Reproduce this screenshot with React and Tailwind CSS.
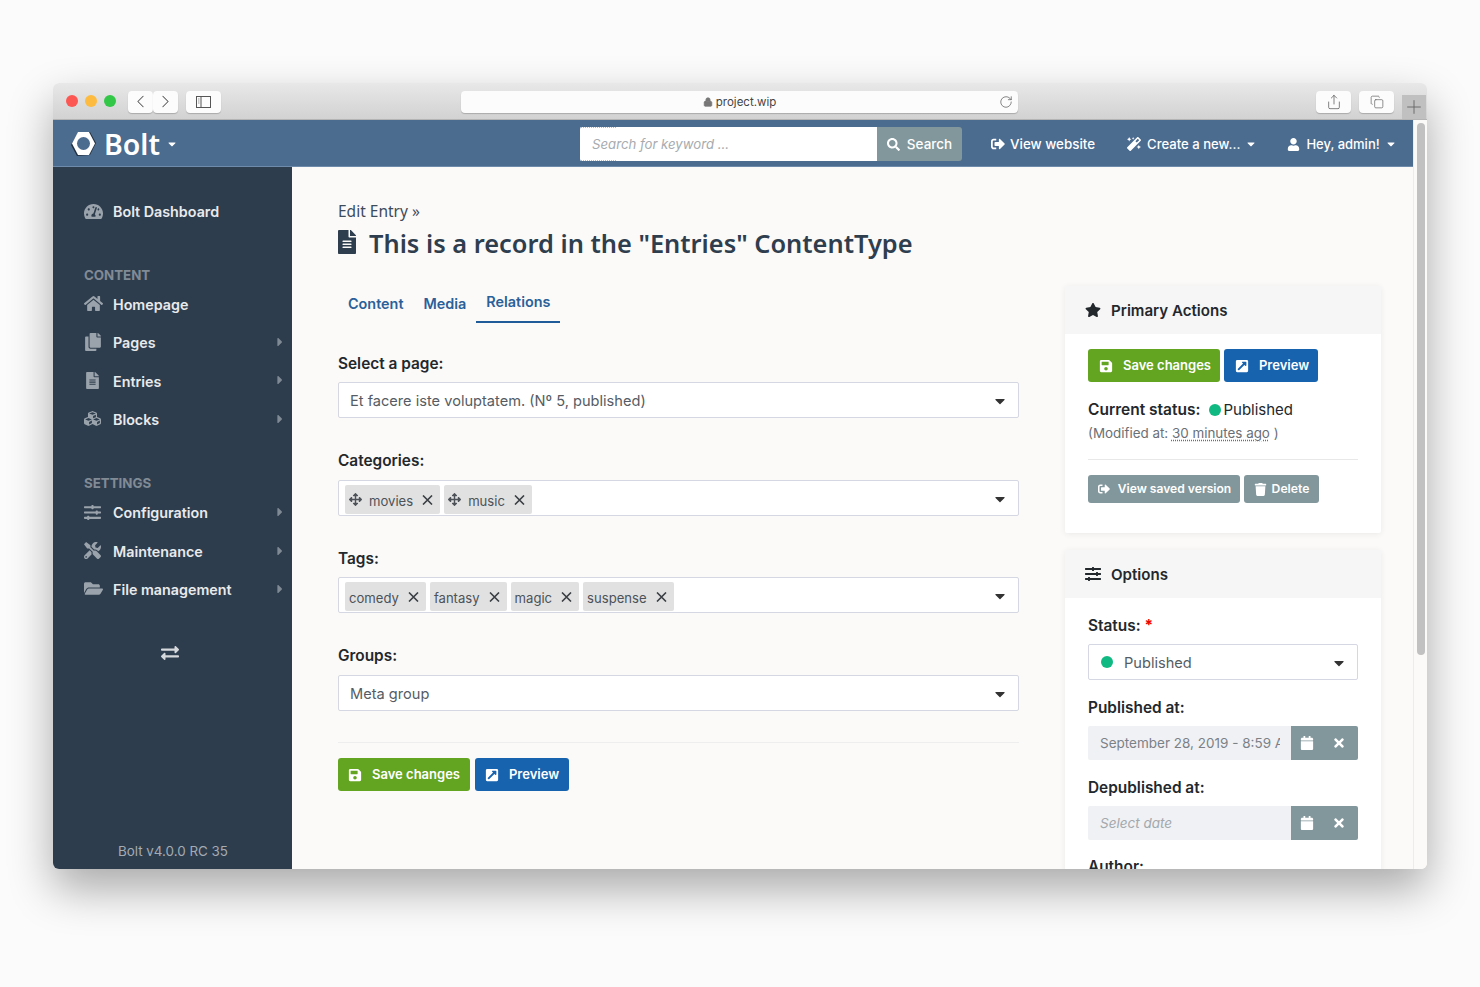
import React from "react";
import {
  FaTachometerAlt, FaHome, FaCopy, FaFileAlt, FaCubes, FaSlidersH, FaTools, FaFolderOpen,
  FaExchangeAlt, FaSignOutAlt, FaMagic, FaUser, FaSearch, FaStar, FaSave, FaExternalLinkSquareAlt,
  FaTrash, FaCalendar, FaTimes, FaArrowsAlt, FaCaretRight, FaCaretDown,
} from "react-icons/fa";
import { Lock, RotateCw, ChevronLeft, ChevronRight, Share, Copy, Plus } from "lucide-react";

const sans = "font-['Inter',sans-serif]";

const Chrome = ({ className, children }) => (
  <div className={`h-[22px] mt-[1px] rounded-[4px] bg-[#fcfcfc] shadow-[0_1px_1px_rgba(0,0,0,0.2)] flex items-center justify-center text-[#555] ${className}`}>
    {children}
  </div>
);

const TitleBar = () => (
  <div className="h-[37px] shrink-0 flex bg-gradient-to-b from-[#e8e8e8] to-[#d2d2d2] border-b border-[#b4b4b4]">
    <div className="flex items-center w-full pl-[13px]">
      <span className="w-[12px] h-[12px] rounded-full bg-[#fc5753]" />
      <span className="w-[12px] h-[12px] rounded-full bg-[#fdbc40] ml-[7px]" />
      <span className="w-[12px] h-[12px] rounded-full bg-[#33c748] ml-[7px]" />
      <Chrome className="w-[25px] ml-[12px]"><ChevronLeft size={21} strokeWidth={1.2} /></Chrome>
      <Chrome className="w-[25px]"><ChevronRight size={21} strokeWidth={1.2} /></Chrome>
      <Chrome className="w-[35px] ml-[8px]">
        <svg width="15" height="12" viewBox="0 0 15 12" fill="none" stroke="#555" strokeWidth="1">
          <rect x="0.5" y="0.5" width="14" height="11" />
          <path d="M5 0.5 V11.5" />
          <path d="M2 3 H3.5 M2 5 H3.5 M2 7 H3.5" stroke="#999" />
        </svg>
      </Chrome>
      <Chrome className="w-[557px] ml-[240px] relative text-[11.5px] font-['Inter',sans-serif]">
        <Lock size={10} className="mr-[3px] mt-[1px] fill-[#777] text-[#777]" />
        <span className="text-[#444] mt-[3px]">project.wip</span>
        <RotateCw size={14} strokeWidth={1.2} className="absolute right-[5px]" />
      </Chrome>
      <Chrome className="w-[35px] ml-[298px]"><Share size={16} strokeWidth={1.1} /></Chrome>
      <Chrome className="w-[35px] ml-[8px]"><Copy size={14} strokeWidth={1.1} /></Chrome>
      <div className="w-[24px] h-[24px] ml-[8px] mt-[12px] bg-[#c0c0c0] flex items-center justify-center text-[#666]">
        <Plus size={22} strokeWidth={1} />
      </div>
    </div>
  </div>
);

const Logo = () => (
  <svg width="27" height="27" viewBox="0 0 27 27" className="shrink-0">
    <polygon points="8,2 20,1 26,12 20,24 7,25 1,14" fill="#22303f" />
    <polygon points="8,1 19,1 25,12.5 19,24 8,24 2,12.5" fill="#fff" />
    <circle cx="13.5" cy="12.5" r="6.5" fill="#4b6b8f" />
  </svg>
);

const Header = () => (
  <div className={`h-[47px] shrink-0 pt-[2px] bg-[#4b6b8f] border-b border-[#6f8bab] flex items-center text-white ${sans}`}>
    <div className="ml-[17px]"><Logo /></div>
    <span className="ml-[7px] text-[28.5px] font-semibold font-['Noto_Sans',sans-serif] leading-none">Bolt</span>
    <FaCaretDown size={12} className="ml-[6px]" />
    <div className="ml-[402px] w-[297px] h-[34px] bg-white rounded-l-[2px] flex items-center pl-[12px] pt-[2px] text-[13.2px] italic text-[#a6abb0] relative">
      Search for keyword ...
      <span className="absolute top-0 left-0 w-[36px] border-t border-dotted border-[#a9bdd2]" />
      <span className="absolute bottom-0 left-0 w-[36px] border-t border-dotted border-[#a9bdd2]" />
    </div>
    <div className="w-[85px] h-[34px] bg-[#82979c] rounded-r-[3px] flex items-center justify-center gap-[7px] text-[13.5px] font-medium">
      <FaSearch size={13} /> Search
    </div>
    <FaSignOutAlt size={14} className="ml-[29px]" />
    <span className="ml-[5px] text-[13.4px] font-medium">View website</span>
    <FaMagic size={14} className="ml-[32px]" />
    <span className="ml-[6px] mt-[2px] text-[13.1px] font-medium">Create a new...</span>
    <FaCaretDown size={12} className="ml-[5px]" />
    <FaUser size={13} className="ml-[30px]" />
    <span className="ml-[6px] mt-[2px] text-[13px] font-medium">Hey, admin!</span>
    <FaCaretDown size={12} className="ml-[5px]" />
  </div>
);

const SideItem = ({ icon: Icon, label, arrow, size = 17 }) => (
  <div className="h-[38.4px] flex items-center pl-[31px] pr-[5px]">
    <div className="w-[29px] text-[#9aa3ac]"><Icon size={size} /></div>
    <span className="text-[14.3px] font-semibold text-[#e8eaec] flex-1 mt-[2px]">{label}</span>
    {arrow && <FaCaretRight size={14} className="text-[#7f8a95]" />}
  </div>
);

const Sidebar = () => (
  <div className={`w-[239px] shrink-0 bg-[#2e3d4d] flex flex-col ${sans}`}>
    <div className="mt-[25px]"><SideItem icon={FaTachometerAlt} label="Bolt Dashboard" size={19} /></div>
    <div className="mt-[37px] pl-[31px] text-[13.3px] font-bold text-[#818b96] leading-[16px] mb-[1px]">CONTENT</div>
    <SideItem icon={FaHome} label="Homepage" size={19} />
    <SideItem icon={FaCopy} label="Pages" arrow size={18} />
    <SideItem icon={FaFileAlt} label="Entries" arrow />
    <SideItem icon={FaCubes} label="Blocks" arrow />
    <div className="mt-[37px] pl-[31px] text-[13.3px] font-bold text-[#818b96] leading-[16px] mb-[2px]">SETTINGS</div>
    <SideItem icon={FaSlidersH} label="Configuration" arrow />
    <SideItem icon={FaTools} label="Maintenance" arrow />
    <SideItem icon={FaFolderOpen} label="File management" arrow size={19} />
    <div className="mt-[36px] flex justify-center pr-[5px] text-[#d6d9dc]"><FaExchangeAlt size={18} /></div>
    <div className="mt-auto mb-[8px] text-center text-[13.4px] text-[#a3abb3] pl-[1px]">Bolt v4.0.0 RC 35</div>
  </div>
);

const Btn = ({ icon: Icon, label, className, iconSize = 14, gap = "gap-[10px]" }) => (
  <div className={`inline-flex items-center justify-center font-semibold text-white rounded-[3px] ${gap} ${className}`}>
    <Icon size={iconSize} /> {label}
  </div>
);

const Save = ({ className = "" }) => <Btn icon={FaSave} label="Save changes" className={`w-[132px] h-[33px] text-[13px] bg-[#63a421] ${className}`} />;
const Preview = ({ className = "" }) => <Btn icon={FaExternalLinkSquareAlt} label="Preview" className={`w-[94px] h-[33px] text-[13px] bg-[#1763ae] ${className}`} />;

const Label = ({ children, className = "" }) => (
  <div className={`text-[15.4px] font-semibold text-[#23282d] leading-[20px] ${className}`}>{children}</div>
);

const Select = ({ children, className = "" }) => (
  <div className={`h-[36px] bg-white border border-[#d5d8e2] rounded-[2px] flex items-center text-[14.6px] text-[#555c63] ${className}`}>
    {children}
    <FaCaretDown size={16} className="ml-auto mr-[10px] mt-[2px] text-[#333]" />
  </div>
);

const XMark = () => (
  <svg width="11" height="10" viewBox="0 0 11 10" className="ml-[9px] mr-[7px] shrink-0">
    <path d="M1 0.5 L10 9.5 M10 0.5 L1 9.5" stroke="#3a3f44" strokeWidth="1.6" fill="none" />
  </svg>
);

const Chip = ({ label, drag }) => (
  <div className="h-[29px] mt-[3px] bg-[#e1e1e1] rounded-[2px] flex items-center pl-[4px] text-[13.1px] text-[#4c5258]">
    {drag && <FaArrowsAlt size={13} className="mr-[7px] text-[#4c5258]" />}
    <span className="mt-[5px]">{label}</span>
    <XMark />
  </div>
);

const Tab = ({ label, active }) => (
  <div className={`h-[40px] px-[10px] flex items-center text-[14.4px] font-semibold text-[#2a6099] ${active ? "border-b-2 border-[#1f5b99]" : "pt-[2px]"}`}>
    {label}
  </div>
);

const Form = () => (
  <div className="w-[681px] shrink-0">
    <div className="flex mt-[8px]">
      <Tab label="Content" />
      <Tab label="Media" />
      <Tab label="Relations" active />
    </div>
    <Label className="mt-[31px]">Select a page:</Label>
    <Select className="mt-[8px] pl-[11px]"><span className="mt-[3px]">Et facere iste voluptatem. (Nº 5, published)</span></Select>
    <Label className="mt-[33px]">Categories:</Label>
    <Select className="mt-[9px] pl-[6px] gap-[4px]">
      <Chip drag label="movies" />
      <Chip drag label="music" />
    </Select>
    <Label className="mt-[33px]">Tags:</Label>
    <Select className="mt-[8px] pl-[6px] gap-[4px]">
      <Chip label="comedy" />
      <Chip label="fantasy" />
      <Chip label="magic" />
      <Chip label="suspense" />
    </Select>
    <Label className="mt-[33px]">Groups:</Label>
    <Select className="mt-[9px] pl-[11px]"><span className="mt-[3px]">Meta group</span></Select>
    <div className="mt-[31px] border-t border-[#eeeeee]" />
    <div className="mt-[15px] flex gap-[5px]"><Save /><Preview /></div>
  </div>
);

const CardHead = ({ icon: Icon, title, size = 16 }) => (
  <div className="h-[48px] bg-[#f6f6f6] flex items-center pl-[20px] text-[15.1px] font-semibold text-[#23282d]">
    <Icon size={size} className="text-[#23282d]" />
    <span className="ml-[10px] mt-[2px]">{title}</span>
  </div>
);

const DateField = ({ value, placeholder, className }) => (
  <div className={`h-[34px] flex rounded-[2px] overflow-hidden ${className}`}>
    <div className={`w-[203px] bg-[#eff1f4] pl-[12px] flex items-center text-[13.5px] overflow-hidden whitespace-nowrap ${placeholder ? "italic text-[#a3a8ad]" : "text-[#7c8187]"}`}>
      <span className="w-[180px] overflow-hidden">{value}</span>
    </div>
    <div className="flex-1 bg-[#82979c] flex items-center text-white">
      <FaCalendar size={14} className="ml-[9px]" />
      <FaTimes size={14} className="ml-[18px]" />
    </div>
  </div>
);

const Side = () => (
  <div className="w-[316px] shrink-0 ml-[46px] mt-[11px]">
    <div className="h-[247px] bg-white rounded-[2px] shadow-[0_1px_6px_rgba(0,0,0,0.07)]">
      <CardHead icon={FaStar} title="Primary Actions" />
      <div className="px-[23px] pt-[15px]">
        <div className="flex gap-[4px]"><Save className="pl-[2px]" /><Preview className="pl-[2px]" /></div>
        <div className="mt-[17px] flex items-center h-[22px] text-[15px] text-[#23282d]">
          <span className="font-semibold text-[15.5px]">Current status:</span>
          <span className="w-[12px] h-[12px] rounded-full bg-[#10b981] ml-[9px] mr-[2px]" />
          <span>Published</span>
        </div>
        <div className="mt-[2px] text-[13.4px] text-[#6a6f75] leading-[20px]">
          (Modified at: <span className="underline decoration-dotted underline-offset-2">30 minutes ago</span> )
        </div>
        <div className="mt-[16px] border-t border-[#e8e8e8]" />
        <div className="mt-[15px] flex gap-[4px]">
          <Btn icon={FaSignOutAlt} label="View saved version" iconSize={12} gap="gap-[8px]" className="w-[152px] h-[28px] pl-[1px] text-[12.1px] bg-[#82979c]" />
          <Btn icon={FaTrash} label="Delete" iconSize={13} gap="gap-[5px]" className="w-[75px] h-[28px] text-[12.2px] bg-[#82979c]" />
        </div>
      </div>
    </div>
    <div className="mt-[17px] h-[400px] bg-white rounded-[2px] shadow-[0_1px_6px_rgba(0,0,0,0.07)]">
      <CardHead icon={FaSlidersH} title="Options" />
      <div className="px-[23px] pt-[18px]">
        <Label>Status: <span className="text-[#ef0000] font-bold">*</span></Label>
        <Select className="mt-[8px] pl-[12px]">
          <span className="w-[12px] h-[12px] rounded-full bg-[#10b981] mr-[11px]" /> <span className="mt-[3px]">Published</span>
        </Select>
        <Label className="mt-[18px]">Published at:</Label>
        <DateField className="mt-[8px]" value="September 28, 2019 - 8:59 AM" />
        <Label className="mt-[18px]">Depublished at:</Label>
        <DateField className="mt-[8px]" value="Select date" placeholder />
        <Label className="mt-[17px]">Author:</Label>
      </div>
    </div>
  </div>
);

const Content = () => (
  <div className={`flex-1 min-w-0 bg-[#fbfaf8] pl-[46px] overflow-hidden ${sans}`}>
    <div className="mt-[33px] text-[15.5px] leading-[22px] text-[#3d4c5c] font-['Noto_Sans',sans-serif]">Edit Entry »</div>
    <div className="mt-[3px] flex items-center text-[#2f3e4e]">
      <FaFileAlt size={24} className="-ml-[3px] -mt-[3px]" />
      <span className="ml-[10px] text-[25.4px] leading-[36px] font-semibold font-['Noto_Sans',sans-serif]">This is a record in the "Entries" ContentType</span>
    </div>
    <div className="flex mt-[14px]">
      <Form />
      <Side />
    </div>
  </div>
);

export default function App() {
  return (
    <div className="w-[1480px] h-[987px] bg-[#fbfbfb] pt-[83px] pl-[53px] overflow-hidden">
      <div className="w-[1374px] h-[786px] rounded-[6px] overflow-hidden flex flex-col shadow-[0_20px_45px_rgba(0,0,0,0.33)]">
        <TitleBar />
        <div className="flex flex-1 min-h-0">
          <div className="flex-1 min-w-0 flex flex-col">
            <Header />
            <div className="flex flex-1 min-h-0">
              <Sidebar />
              <Content />
            </div>
          </div>
          <div className="w-[14px] shrink-0 bg-[#fbfaf8] border-l border-[#ececec] pt-[3px] pl-[3px]">
            <div className="w-[8px] h-[532px] rounded-full bg-[#c1c1c1]" />
          </div>
        </div>
      </div>
    </div>
  );
}
